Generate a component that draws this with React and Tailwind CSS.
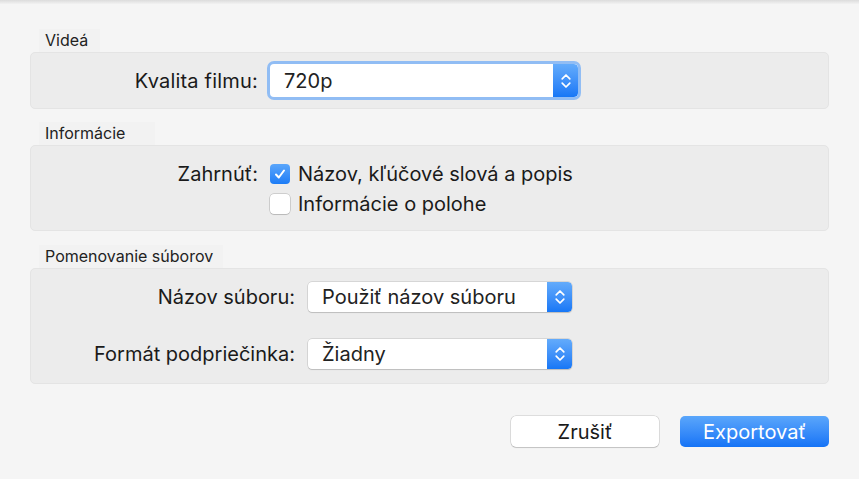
import React from 'react'

const font = { fontFamily: 'Inter, "Noto Sans", "Liberation Sans", sans-serif' }

function Stepper() {
  return (
    <div className="w-[25px] h-full flex items-center justify-center bg-gradient-to-b from-[#63abfb] to-[#1677f6] rounded-r-[4px]">
      <svg width="12" height="18" viewBox="0 0 12 18" fill="none" stroke="white" strokeWidth="1.7" strokeLinecap="round" strokeLinejoin="round">
        <path d="M2.2 6.8 L6 3 L9.8 6.8" />
        <path d="M2.2 11.2 L6 15 L9.8 11.2" />
      </svg>
    </div>
  )
}

function Select({ value, focused, className }) {
  return (
    <div className={`flex bg-white rounded-[4px] overflow-hidden ${focused ? 'ring-[3px] ring-[#91bdf4]' : 'shadow-[0_0_0_0.5px_rgba(0,0,0,0.18),0_1px_1px_rgba(0,0,0,0.12)]'} ${className}`}>
      <div className="flex-1 flex items-center pl-[14px] text-[20px] text-[#222] leading-none">{value}</div>
      <Stepper />
    </div>
  )
}

function Checkbox({ checked }) {
  return checked ? (
    <div className="w-[20px] h-[20px] shrink-0 rounded-[4px] bg-gradient-to-b from-[#5aa6fb] to-[#1b7cf6] flex items-center justify-center">
      <svg width="14" height="14" viewBox="0 0 14 14" fill="none" stroke="white" strokeWidth="2" strokeLinecap="round" strokeLinejoin="round">
        <path d="M3 7.5 L5.8 10.5 L11 3.5" />
      </svg>
    </div>
  ) : (
    <div className="w-[20px] h-[20px] shrink-0 rounded-[4px] bg-white shadow-[0_0_0_0.5px_rgba(0,0,0,0.25),0_1px_1px_rgba(0,0,0,0.1)]"></div>
  )
}

function SectionLabel({ children, extra = 'pr-[10px]' }) {
  return (
    <div className={`ml-[9px] self-start pl-[6px] ${extra} h-[23px] flex items-end pb-[4px] bg-[#f2f2f2] text-[16px] leading-none text-[#222]`}>{children}</div>
  )
}

export default function App() {
  return (
    <div style={font} className="w-[859px] h-[479px] bg-[#f5f5f5] relative overflow-hidden">
      <div className="h-[4px] bg-gradient-to-b from-[#dcdcdc] to-[#f2f2f2]"></div>
      <div className="px-[30px] flex flex-col">
        {/* Videá */}
        <div className="mt-[25px] flex flex-col">
          <SectionLabel extra="pr-[12px]">Videá</SectionLabel>
          <div className="h-[57px] bg-[#ececec] border border-[#e4e4e4] rounded-[5px] flex items-center">
            <div className="w-[227px] text-right text-[20px] leading-none text-[#1a1a1a] tracking-[0.2px]">Kvalita filmu:</div>
            <Select value="720p" focused className="ml-[12px] w-[308px] h-[33px]" />
          </div>
        </div>

        {/* Informácie */}
        <div className="mt-[13px] flex flex-col">
          <SectionLabel extra="pr-[30px]">Informácie</SectionLabel>
          <div className="h-[86px] bg-[#ececec] border border-[#e4e4e4] rounded-[5px] flex pt-[18px]">
            <div className="w-[227px] text-right text-[20px] text-[#1a1a1a] leading-[20px]">Zahrnúť:</div>
            <div className="ml-[12px] flex flex-col gap-[10px]">
              <div className="flex items-center gap-[8px] text-[20px] text-[#1a1a1a] leading-[20px]">
                <Checkbox checked />
                <span>Názov, kľúčové slová a popis</span>
              </div>
              <div className="flex items-center gap-[8px] text-[20px] text-[#1a1a1a] leading-[20px]">
                <Checkbox />
                <span>Informácie o polohe</span>
              </div>
            </div>
          </div>
        </div>

        {/* Pomenovanie súborov */}
        <div className="mt-[14px] flex flex-col">
          <SectionLabel extra="pr-[10px]">Pomenovanie súborov</SectionLabel>
          <div className="h-[116px] bg-[#ececec] border border-[#e4e4e4] rounded-[5px] flex flex-col pt-[13px] gap-[27px]">
            <div className="flex items-center">
              <div className="w-[264px] text-right text-[20px] leading-none text-[#1a1a1a]">Názov súboru:</div>
              <Select value="Použiť názov súboru" className="ml-[13px] w-[264px] h-[30px]" />
            </div>
            <div className="flex items-center">
              <div className="w-[264px] text-right text-[20px] leading-none text-[#1a1a1a]">Formát podpriečinka:</div>
              <Select value="Žiadny" className="ml-[13px] w-[264px] h-[30px]" />
            </div>
          </div>
        </div>

        {/* Buttons */}
        <div className="mt-[32px] flex justify-end gap-[21px]">
          <button className="w-[148px] h-[31px] bg-white rounded-[5px] text-[20px] leading-none text-[#1a1a1a] shadow-[0_0_0_0.5px_rgba(0,0,0,0.2),0_1px_1px_rgba(0,0,0,0.12)]">Zrušiť</button>
          <button className="w-[149px] h-[31px] rounded-[5px] text-[20px] leading-none text-white bg-gradient-to-b from-[#5aa6fb] to-[#1473f6]">Exportovať</button>
        </div>
      </div>
    </div>
  )
}
